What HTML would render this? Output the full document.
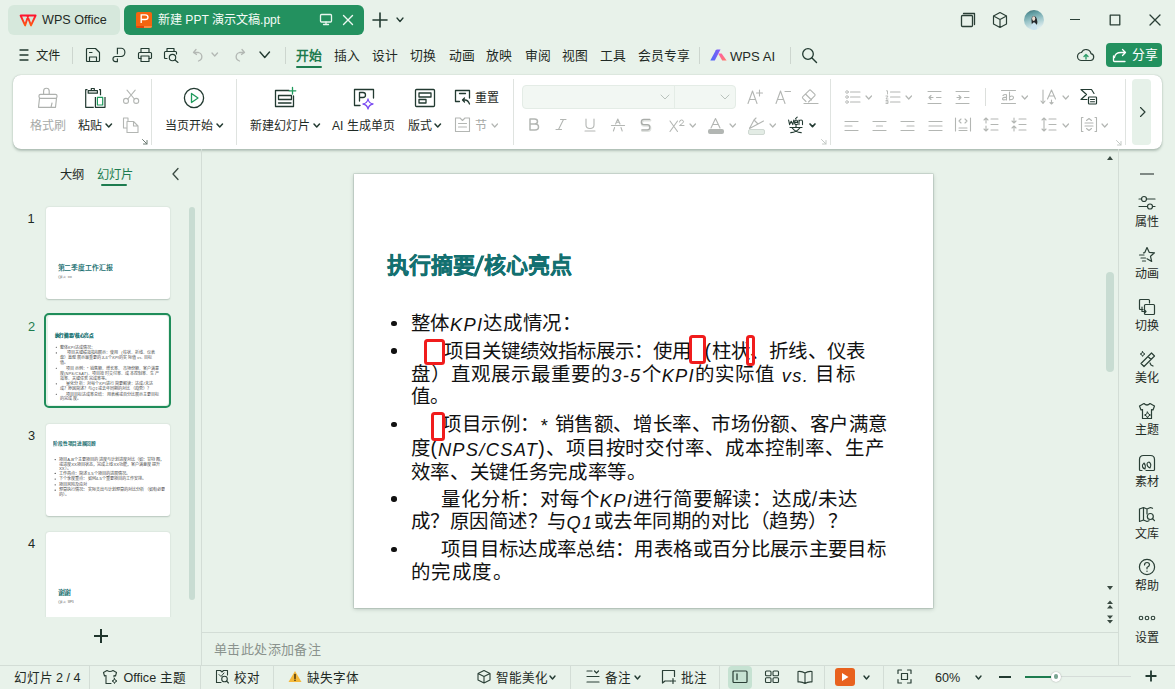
<!DOCTYPE html>
<html lang="zh-CN"><head><meta charset="utf-8"><title>WPS</title>
<style>
html,body{margin:0;padding:0}
body{width:1175px;height:689px;overflow:hidden;position:relative;background:#e8f2ea;font-family:"Liberation Sans",sans-serif;}
.a{position:absolute;white-space:nowrap;margin:0}
svg.a{overflow:visible}
i.lt{font-family:"Liberation Sans",sans-serif;font-style:italic;font-size:0.94em;letter-spacing:1.3px;position:relative;top:1px}
</style></head><body>
<div class="a" style="left:8px;top:5px;width:112px;height:30px;background:#d6e8dc;border-radius:6px"></div>
<svg class="a" style="left:19px;top:13.7px" width="18" height="13" viewBox="0 0 18 13" fill="none"><defs><linearGradient id="wg" x1="0" y1="0" x2="0" y2="1"><stop offset="0" stop-color="#ff1530"/><stop offset="1" stop-color="#ff5a12"/></linearGradient></defs><path d="M1.6 1.5 H9.3 L6.1 11.4 Z M8.2 1.5 H16.6 L12 11.4 Z" stroke="url(#wg)" stroke-width="1.9" stroke-linejoin="round"/></svg>
<div class="a" style="left:42px;top:14px;font-size:12.6px;line-height:12.6px;color:#1f2a25;font-weight:normal;">WPS Office</div>
<div class="a" style="left:124px;top:5px;width:240px;height:30px;background:#23915f;border-radius:6px"></div>
<svg class="a" style="left:136px;top:12px" width="16" height="16" viewBox="0 0 16 16"><rect x="0" y="0" width="16" height="16" rx="2" fill="#f4650f"/><path d="M0 14 H8 V16 H2 Q0 16 0 14 Z" fill="#e3470b"/><path d="M8 14 H16 Q16 16 14 16 H8 Z" fill="#ff8a3e"/><path d="M5.2 11 V2.8 H9.2 Q12 2.8 12 5.2 Q12 7.5 9.2 7.5 H5.2" stroke="#ffffff" stroke-width="1.35" fill="none"/></svg>
<div class="a" style="left:158px;top:14px;font-size:12.1px;line-height:12.1px;color:#f4fbf6;font-weight:normal;">新建 PPT 演示文稿.ppt</div>
<svg class="a" style="left:319px;top:13px;" width="14" height="13" viewBox="0 0 14 13" fill="none" stroke-linecap="round" stroke-linejoin="round"><rect x="1.5" y="1.5" width="11" height="7.5" rx="1" stroke="#e9f6ee" stroke-width="1.3"/><path d="M7 9 V11.5 M4.5 11.5 H9.5" stroke="#e9f6ee" stroke-width="1.3"/></svg>
<svg class="a" style="left:342px;top:14px;" width="12" height="12" viewBox="0 0 12 12" fill="none" stroke-linecap="round" stroke-linejoin="round"><path d="M1.5 1.5 L10.5 10.5 M10.5 1.5 L1.5 10.5" stroke="#eef8f2" stroke-width="1.4"/></svg>
<svg class="a" style="left:372px;top:12px;" width="16" height="16" viewBox="0 0 16 16" fill="none" stroke-linecap="round" stroke-linejoin="round"><path d="M8 1 V15 M1 8 H15" stroke="#223a31" stroke-width="1.6"/></svg>
<svg class="a" style="left:396px;top:17px;" width="8" height="5.5" viewBox="0 0 8 5.5" fill="none" stroke-linecap="round" stroke-linejoin="round"><path d="M1 1 L4.0 4.5 L7 1" stroke="#223a31" stroke-width="1.3"/></svg>
<svg class="a" style="left:960px;top:12px;" width="16" height="16" viewBox="0 0 16 16" fill="none" stroke-linecap="round" stroke-linejoin="round"><rect x="1.5" y="3.5" width="11" height="11" rx="1" stroke="#2a3f36" stroke-width="1.3"/><path d="M3.5 1.5 H14.5 V12.5" stroke="#2a3f36" stroke-width="1.3"/></svg>
<svg class="a" style="left:992px;top:11px;" width="16" height="18" viewBox="0 0 16 18" fill="none" stroke-linecap="round" stroke-linejoin="round"><path d="M8 1.5 L14.5 5 V13 L8 16.5 L1.5 13 V5 Z M1.5 5 L8 8.5 L14.5 5 M8 8.5 V16.5" stroke="#2a3f36" stroke-width="1.2"/></svg>
<svg class="a" style="left:1024px;top:10px" width="20" height="20" viewBox="0 0 20 20"><defs><clipPath id="av"><circle cx="10" cy="10" r="10"/></clipPath><linearGradient id="avg" x1="0" y1="0" x2="0.3" y2="1"><stop offset="0" stop-color="#3a6268"/><stop offset="0.25" stop-color="#5f9ba0"/><stop offset="0.6" stop-color="#9cc6ca"/><stop offset="1" stop-color="#dcecee"/></linearGradient></defs><g clip-path="url(#av)"><rect width="20" height="20" fill="url(#avg)"/><path d="M9.5 6 Q7.5 6.5 7.5 10 Q7.5 13 8 14.5 L13 14.5 Q14 12.5 12.8 9 Q12 6 9.5 6 Z" fill="#24272a"/><ellipse cx="9.7" cy="8.6" rx="1.6" ry="2.3" fill="#eadbd0"/><path d="M6.5 20 Q7 13.5 9.8 12.2 Q12.8 12.5 13.2 20 Z" fill="#c9e2ee"/></g></svg>
<div class="a" style="left:1070px;top:19px;width:10px;height:1.3px;background:#2a3f36;"></div>
<svg class="a" style="left:1109px;top:14px;" width="12" height="12" viewBox="0 0 12 12" fill="none" stroke-linecap="round" stroke-linejoin="round"><rect x="1.2" y="1.2" width="9.6" height="9.6" stroke="#2a3f36" stroke-width="1.3"/></svg>
<svg class="a" style="left:1149px;top:14px;" width="12" height="12" viewBox="0 0 12 12" fill="none" stroke-linecap="round" stroke-linejoin="round"><path d="M1 1 L11 11 M11 1 L1 11" stroke="#2a3f36" stroke-width="1.3"/></svg>
<svg class="a" style="left:19px;top:48px;" width="11" height="14" viewBox="0 0 11 14" fill="none" stroke-linecap="round" stroke-linejoin="round"><path d="M1 2 H9 M1 7 H9 M1 12 H9" stroke="#223a31" stroke-width="1.3"/></svg>
<div class="a" style="left:36px;top:50px;font-size:12.3px;line-height:12.3px;color:#1f2a25;font-weight:normal;">文件</div>
<div class="a" style="left:72px;top:47px;width:1px;height:17px;background:#cdd6cf;"></div>
<svg class="a" style="left:85px;top:47px;" width="16" height="16" viewBox="0 0 16 16" fill="none" stroke-linecap="round" stroke-linejoin="round"><path d="M1.5 2.5 Q1.5 1.5 2.5 1.5 H10.5 L14.5 5.5 V13.5 Q14.5 14.5 13.5 14.5 H2.5 Q1.5 14.5 1.5 13.5 Z" stroke="#223a31" stroke-width="1.15"/><rect x="4.5" y="10" width="7" height="4.5" stroke="#223a31" stroke-width="1.15"/><path d="M4.5 5.5 H7" stroke="#223a31" stroke-width="1.15"/></svg>
<svg class="a" style="left:111px;top:47px;" width="16" height="17" viewBox="0 0 16 17" fill="none" stroke-linecap="round" stroke-linejoin="round"><path d="M6.4 7.2 V1.2 H10.2 A3.7 4.15 0 0 1 10.2 9.5 H4.5 A2.55 2.55 0 0 0 4.5 14.6 H6.4 V11.5" stroke="#223a31" stroke-width="1.15" stroke-linecap="butt" stroke-linejoin="miter"/></svg>
<svg class="a" style="left:137px;top:47px;" width="16" height="16" viewBox="0 0 16 16" fill="none" stroke-linecap="round" stroke-linejoin="round"><rect x="4" y="1.5" width="8" height="4" stroke="#223a31" stroke-width="1.15"/><path d="M4 11.5 H2.5 Q1.5 11.5 1.5 10.5 V6.5 Q1.5 5.5 2.5 5.5 H13.5 Q14.5 5.5 14.5 6.5 V10.5 Q14.5 11.5 13.5 11.5 H12" stroke="#223a31" stroke-width="1.15"/><rect x="4" y="9" width="8" height="5.5" stroke="#223a31" stroke-width="1.15"/></svg>
<svg class="a" style="left:163px;top:47px;" width="17" height="16" viewBox="0 0 17 16" fill="none" stroke-linecap="round" stroke-linejoin="round"><path d="M4 4.5 V1.5 H11 V4.5 M4 11.5 H2.5 Q1.5 11.5 1.5 10.5 V5.5 Q1.5 4.5 2.5 4.5 H12.5 Q13.5 4.5 13.5 5.5 V7" stroke="#223a31" stroke-width="1.15"/><circle cx="9.5" cy="10.5" r="3.2" stroke="#223a31" stroke-width="1.15"/><path d="M12 13 L15 15.5" stroke="#223a31" stroke-width="1.15"/></svg>
<svg class="a" style="left:192px;top:48px;" width="13" height="14" viewBox="0 0 13 14" fill="none" stroke-linecap="round" stroke-linejoin="round"><path d="M4 1.5 L1.5 4.5 L4.5 6.5 M1.5 4.5 H6.5 A5 4.5 0 0 1 6.5 13" stroke="#b3b8b4" stroke-width="1.3"/></svg>
<svg class="a" style="left:211px;top:52px;" width="7.5" height="5" viewBox="0 0 7.5 5" fill="none" stroke-linecap="round" stroke-linejoin="round"><path d="M1 1 L3.75 4 L6.5 1" stroke="#b3b8b4" stroke-width="1.3"/></svg>
<svg class="a" style="left:233px;top:48px;" width="13" height="14" viewBox="0 0 13 14" fill="none" stroke-linecap="round" stroke-linejoin="round"><path d="M9 1.5 L11.5 4.5 L8.5 6.5 M11.5 4.5 H6.5 A5 4.5 0 0 0 6.5 13" stroke="#b3b8b4" stroke-width="1.3"/></svg>
<svg class="a" style="left:259px;top:51px;" width="11.5" height="7.5" viewBox="0 0 11.5 7.5" fill="none" stroke-linecap="round" stroke-linejoin="round"><path d="M1 1 L5.75 6.5 L10.5 1" stroke="#223a31" stroke-width="1.4"/></svg>
<div class="a" style="left:285px;top:47px;width:1px;height:17px;background:#cdd6cf;"></div>
<div class="a" style="left:296px;top:49.8px;font-size:12.8px;line-height:12.8px;color:#1d7c4f;font-weight:bold;">开始</div>
<div class="a" style="left:334px;top:49.8px;font-size:12.8px;line-height:12.8px;color:#1f2a25;font-weight:normal;">插入</div>
<div class="a" style="left:372px;top:49.8px;font-size:12.8px;line-height:12.8px;color:#1f2a25;font-weight:normal;">设计</div>
<div class="a" style="left:410px;top:49.8px;font-size:12.8px;line-height:12.8px;color:#1f2a25;font-weight:normal;">切换</div>
<div class="a" style="left:448.5px;top:49.8px;font-size:12.8px;line-height:12.8px;color:#1f2a25;font-weight:normal;">动画</div>
<div class="a" style="left:486px;top:49.8px;font-size:12.8px;line-height:12.8px;color:#1f2a25;font-weight:normal;">放映</div>
<div class="a" style="left:524.5px;top:49.8px;font-size:12.8px;line-height:12.8px;color:#1f2a25;font-weight:normal;">审阅</div>
<div class="a" style="left:562px;top:49.8px;font-size:12.8px;line-height:12.8px;color:#1f2a25;font-weight:normal;">视图</div>
<div class="a" style="left:600px;top:49.8px;font-size:12.8px;line-height:12.8px;color:#1f2a25;font-weight:normal;">工具</div>
<div class="a" style="left:638px;top:49.8px;font-size:12.8px;line-height:12.8px;color:#1f2a25;font-weight:normal;">会员专享</div>
<div class="a" style="left:296px;top:66px;width:26px;height:2px;background:#1d7c4f;border-radius:1px"></div>
<div class="a" style="left:699px;top:47px;width:1px;height:17px;background:#cdd6cf;"></div>
<svg class="a" style="left:710px;top:49px" width="17" height="12" viewBox="0 0 17 12"><defs><linearGradient id="ga" x1="0" y1="0" x2="1" y2="0"><stop offset="0" stop-color="#4a6cf7"/><stop offset="1" stop-color="#8b5cf6"/></linearGradient><linearGradient id="gb" x1="0" y1="0" x2="1" y2="1"><stop offset="0" stop-color="#ff5fa8"/><stop offset="1" stop-color="#ff7a6a"/></linearGradient></defs><path d="M0.3 11.5 L5.8 1.2 Q6.2 0.5 7 0.5 H10.5 L4.8 11.5 Z" fill="url(#ga)"/><path d="M8.2 4.6 L11.6 4.6 L16.6 11.5 H12.2 Z" fill="url(#gb)"/></svg>
<div class="a" style="left:730px;top:49.6px;font-size:13.1px;line-height:13.1px;color:#1f2a25;font-weight:normal;">WPS AI</div>
<div class="a" style="left:790px;top:47px;width:1px;height:17px;background:#cdd6cf;"></div>
<svg class="a" style="left:801px;top:47px;" width="17" height="17" viewBox="0 0 17 17" fill="none" stroke-linecap="round" stroke-linejoin="round"><circle cx="7" cy="7" r="5.3" stroke="#223a31" stroke-width="1.3"/><path d="M11 11 L15.5 15.5" stroke="#223a31" stroke-width="1.4"/></svg>
<svg class="a" style="left:1077px;top:47px;" width="18" height="15" viewBox="0 0 18 15" fill="none" stroke-linecap="round" stroke-linejoin="round"><path d="M4.5 13.5 H13.5 A3.5 3.5 0 0 0 14 6.6 A5 5 0 0 0 4.5 5.5 A4 4 0 0 0 4.5 13.5 Z" stroke="#2a3f36" stroke-width="1.2"/><path d="M9 12 V7.5 M7 9.5 L9 7.5 L11 9.5" stroke="#2f9e6a" stroke-width="1.4"/></svg>
<div class="a" style="left:1106px;top:43px;width:56px;height:24px;background:#23915f;border-radius:4px"></div>
<svg class="a" style="left:1112px;top:48px;" width="16" height="15" viewBox="0 0 16 15" fill="none" stroke-linecap="round" stroke-linejoin="round"><path d="M1.5 8 V12.5 Q1.5 13.5 2.5 13.5 H13" stroke="#ffffff" stroke-width="1.3"/><path d="M2.5 9.5 Q3 4.5 9 4.5 H13.5 M10.5 1.5 L13.5 4.5 L10.5 7.5" stroke="#ffffff" stroke-width="1.3"/></svg>
<div class="a" style="left:1132px;top:49px;font-size:12.8px;line-height:12.8px;color:#ffffff;font-weight:normal;">分享</div>
<div class="a" style="left:13px;top:75px;width:1149px;height:74px;background:#fff;border-radius:8px;box-shadow:0 1.5px 2.5px rgba(40,70,55,0.28),0 0 1px rgba(40,70,55,0.3)"></div>
<svg class="a" style="left:37px;top:86px;" width="22" height="23" viewBox="0 0 22 23" fill="none" stroke-linecap="round" stroke-linejoin="round"><path d="M6.6 8.3 V5 A2.7 2.7 0 0 1 12.2 5 V8.3" stroke="#aeb1ae" stroke-width="1.15"/><path d="M3.5 8.3 H18.5 Q20 8.3 20 9.8 V10.8 Q20 12.3 18.5 12.3 H3.5 Q2 12.3 2 10.8 V9.8 Q2 8.3 3.5 8.3 Z" stroke="#aeb1ae" stroke-width="1.15"/><path d="M2.5 12.3 L1.5 21.3 H18.5 L19.5 12.3 M14 21.3 L15 17" stroke="#aeb1ae" stroke-width="1.15"/></svg>
<div class="a" style="left:30px;top:120px;font-size:12px;line-height:12px;color:#a7aaa7;font-weight:normal;">格式刷</div>
<svg class="a" style="left:83px;top:87px;" width="24" height="22" viewBox="0 0 24 22" fill="none" stroke-linecap="round" stroke-linejoin="round"><path d="M4.5 2.7 H2.7 V20.3 H10.8 M16 2.7 H17.5 V8.3 M12.4 10.1 V20.3 H22 V10.1" stroke="#223a31" stroke-width="1.2" stroke-linecap="butt"/><path d="M5.2 3.7 H14.4 V6.2 H5.2 Z M8.3 3.7 V1.5 H11.3 V3.7" stroke="#223a31" stroke-width="1.2"/><rect x="14.4" y="10.3" width="5.3" height="7.7" stroke="#1f9a5c" stroke-width="1.2"/></svg>
<div class="a" style="left:78px;top:120px;font-size:12px;line-height:12px;color:#1f2a25;font-weight:normal;">粘贴</div>
<svg class="a" style="left:104.5px;top:123px;" width="7.5" height="5" viewBox="0 0 7.5 5" fill="none" stroke-linecap="round" stroke-linejoin="round"><path d="M1 1 L3.75 4 L6.5 1" stroke="#223a31" stroke-width="1.5"/></svg>
<svg class="a" style="left:122px;top:88px;" width="18" height="17" viewBox="0 0 18 17" fill="none" stroke-linecap="round" stroke-linejoin="round"><circle cx="4" cy="12.9" r="2.5" stroke="#b3b6b3" stroke-width="1.1"/><circle cx="14.2" cy="12.9" r="2.5" stroke="#b3b6b3" stroke-width="1.1"/><path d="M5.8 11 L13.2 2.2 M12.4 11 L5 2.2" stroke="#b3b6b3" stroke-width="1.1"/></svg>
<svg class="a" style="left:122px;top:116px;" width="18" height="18" viewBox="0 0 18 18" fill="none" stroke-linecap="round" stroke-linejoin="round"><path d="M6 4.5 V2 H1.5 V12 H4.5" stroke="#b3b6b3" stroke-width="1.1"/><path d="M5 5.5 H11.5 L16 10 V16.5 H5 Z M11.5 5.5 V10 H16" stroke="#b3b6b3" stroke-width="1.1"/></svg>
<svg class="a" style="left:141px;top:138px;" width="8" height="8" viewBox="0 0 8 8" fill="none" stroke-linecap="round" stroke-linejoin="round"><path d="M1.5 1.5 L6 6 M6 2.5 V6 H2.5" stroke="#6b7a72" stroke-width="1"/></svg>
<div class="a" style="left:151px;top:79px;width:1px;height:66px;background:#dfe3e0;"></div>
<svg class="a" style="left:183px;top:87px;" width="22" height="22" viewBox="0 0 22 22" fill="none" stroke-linecap="round" stroke-linejoin="round"><circle cx="11" cy="11" r="9.6" stroke="#223a31" stroke-width="1.3"/><path d="M8.5 6.5 L15 11 L8.5 15.5 Z" stroke="#1f9a5c" stroke-width="1.3"/></svg>
<div class="a" style="left:165px;top:120px;font-size:12px;line-height:12px;color:#1f2a25;font-weight:normal;">当页开始</div>
<svg class="a" style="left:215.5px;top:123px;" width="7.5" height="5" viewBox="0 0 7.5 5" fill="none" stroke-linecap="round" stroke-linejoin="round"><path d="M1 1 L3.75 4 L6.5 1" stroke="#223a31" stroke-width="1.5"/></svg>
<div class="a" style="left:236px;top:79px;width:1px;height:66px;background:#dfe3e0;"></div>
<svg class="a" style="left:273px;top:86px;" width="24" height="23" viewBox="0 0 24 23" fill="none" stroke-linecap="round" stroke-linejoin="round"><path d="M16 4.5 H2.5 V20.5 H20.5 V10" stroke="#223a31" stroke-width="1.3"/><rect x="5.5" y="9.5" width="13" height="4" stroke="#223a31" stroke-width="1.3"/><path d="M5.5 17 H18" stroke="#223a31" stroke-width="1.3"/><path d="M19.5 1.5 V8 M16.2 4.8 H22.8" stroke="#1f9a5c" stroke-width="1.3"/></svg>
<div class="a" style="left:250px;top:120px;font-size:12px;line-height:12px;color:#1f2a25;font-weight:normal;">新建幻灯片</div>
<svg class="a" style="left:313px;top:123px;" width="7.5" height="5" viewBox="0 0 7.5 5" fill="none" stroke-linecap="round" stroke-linejoin="round"><path d="M1 1 L3.75 4 L6.5 1" stroke="#223a31" stroke-width="1.5"/></svg>
<svg class="a" style="left:353px;top:88px;" width="24" height="24" viewBox="0 0 24 24" fill="none" stroke-linecap="round" stroke-linejoin="round"><path d="M7 17.5 H1.5 V1.5 H20.5 V10" stroke="#223a31" stroke-width="1.3"/><path d="M6.5 13 V4.5 H10 Q12.5 4.5 12.5 7 Q12.5 9.5 10 9.5 H6.5" stroke="#223a31" stroke-width="1.3"/><path d="M15 11 Q15.8 15.2 20 16 Q15.8 16.8 15 21 Q14.2 16.8 10 16 Q14.2 15.2 15 11 Z" stroke="#7c4df2" stroke-width="1.3"/></svg>
<div class="a" style="left:332px;top:120px;font-size:12px;line-height:12px;color:#1f2a25;font-weight:normal;">AI 生成单页</div>
<svg class="a" style="left:414px;top:88px;" width="22" height="20" viewBox="0 0 22 20" fill="none" stroke-linecap="round" stroke-linejoin="round"><rect x="1.5" y="1.5" width="19" height="17" rx="1" stroke="#223a31" stroke-width="1.3"/><rect x="5" y="5" width="12" height="4" stroke="#223a31" stroke-width="1.3"/><rect x="5" y="11.5" width="7" height="3.5" stroke="#223a31" stroke-width="1.3"/></svg>
<div class="a" style="left:408px;top:120px;font-size:12px;line-height:12px;color:#1f2a25;font-weight:normal;">版式</div>
<svg class="a" style="left:434px;top:123px;" width="7.5" height="5" viewBox="0 0 7.5 5" fill="none" stroke-linecap="round" stroke-linejoin="round"><path d="M1 1 L3.75 4 L6.5 1" stroke="#223a31" stroke-width="1.5"/></svg>
<svg class="a" style="left:454px;top:89px;" width="18" height="17" viewBox="0 0 18 17" fill="none" stroke-linecap="round" stroke-linejoin="round"><path d="M5.5 12.5 H1.5 V1.5 H15.5 V9" stroke="#223a31" stroke-width="1.3"/><path d="M5.5 4.5 H11.5" stroke="#223a31" stroke-width="1.3"/><path d="M8.5 11 L10.5 9 M8.5 11 L10.5 13 M8.5 11 H11 Q14 11 15.5 15" stroke="#223a31" stroke-width="1.3"/></svg>
<div class="a" style="left:475px;top:92px;font-size:12px;line-height:12px;color:#1f2a25;font-weight:normal;">重置</div>
<svg class="a" style="left:454px;top:116px;" width="18" height="17" viewBox="0 0 18 17" fill="none" stroke-linecap="round" stroke-linejoin="round"><path d="M1.5 2 V15.5 H15.5 V2 H11 L8.5 4.5 L6 2 Z" stroke="#b3b6b3" stroke-width="1.1"/><path d="M4.5 7.5 H12.5 M4.5 11 H12.5" stroke="#b3b6b3" stroke-width="1.1"/></svg>
<div class="a" style="left:475px;top:120px;font-size:12px;line-height:12px;color:#a7aaa7;font-weight:normal;">节</div>
<svg class="a" style="left:491px;top:123px;" width="7.5" height="5" viewBox="0 0 7.5 5" fill="none" stroke-linecap="round" stroke-linejoin="round"><path d="M1 1 L3.75 4 L6.5 1" stroke="#b3b6b3" stroke-width="1.2"/></svg>
<div class="a" style="left:513px;top:79px;width:1px;height:66px;background:#dfe3e0;"></div>
<div class="a" style="left:522px;top:85px;width:212px;height:22px;background:#f2f7f3;border:1px solid #e4ece6;border-radius:4px"></div>
<div class="a" style="left:674px;top:86px;width:1px;height:22px;background:#e4ece6;"></div>
<svg class="a" style="left:660px;top:94px;" width="10" height="6" viewBox="0 0 10 6" fill="none" stroke-linecap="round" stroke-linejoin="round"><path d="M1 1 L5.0 5 L9 1" stroke="#b9c2bc" stroke-width="1"/></svg>
<svg class="a" style="left:720px;top:94px;" width="10" height="6" viewBox="0 0 10 6" fill="none" stroke-linecap="round" stroke-linejoin="round"><path d="M1 1 L5.0 5 L9 1" stroke="#b9c2bc" stroke-width="1"/></svg>
<svg class="a" style="left:747px;top:89px;" width="17" height="16" viewBox="0 0 17 16" fill="none" stroke-linecap="round" stroke-linejoin="round"><path d="M1 14.5 L5.5 2 L10 14.5 M2.6 10.5 H8.4" stroke="#b3b6b3" stroke-width="1.1"/><path d="M12.5 1 V7 M9.5 4 H15.5" stroke="#b3b6b3" stroke-width="1.1"/></svg>
<svg class="a" style="left:775px;top:89px;" width="17" height="16" viewBox="0 0 17 16" fill="none" stroke-linecap="round" stroke-linejoin="round"><path d="M1 14.5 L5.5 2 L10 14.5 M2.6 10.5 H8.4" stroke="#b3b6b3" stroke-width="1.1"/><path d="M10 2.5 H15.5" stroke="#b3b6b3" stroke-width="1.1"/></svg>
<svg class="a" style="left:801px;top:89px;" width="18" height="16" viewBox="0 0 18 16" fill="none" stroke-linecap="round" stroke-linejoin="round"><path d="M5 12.5 L1.8 9.3 Q1 8.5 1.8 7.7 L8.2 1.3 Q9 0.5 9.8 1.3 L13.7 5.2 Q14.5 6 13.7 6.8 L7.5 13 M4.5 5 L10.5 11" stroke="#b3b6b3" stroke-width="1.1"/><path d="M3 14.5 H17" stroke="#b3b6b3" stroke-width="1.2"/></svg>
<svg class="a" style="left:528px;top:118px;" width="12" height="13" viewBox="0 0 12 13" fill="none" stroke-linecap="round" stroke-linejoin="round"><path d="M2 1 H6.5 Q9.5 1 9.5 3.5 Q9.5 6 6.5 6 H2 Z M2 6 H7 Q10.5 6 10.5 9 Q10.5 12 7 12 H2 Z" stroke="#b3b6b3" stroke-width="1.5"/></svg>
<svg class="a" style="left:555px;top:118px;" width="12" height="13" viewBox="0 0 12 13" fill="none" stroke-linecap="round" stroke-linejoin="round"><path d="M8.5 1.5 L3.5 11.5 M5.5 1.5 H11 M1 11.5 H6.5" stroke="#b3b6b3" stroke-width="1.1"/></svg>
<svg class="a" style="left:584px;top:118px;" width="12" height="14" viewBox="0 0 12 14" fill="none" stroke-linecap="round" stroke-linejoin="round"><path d="M2 1 V7 Q2 10.5 6 10.5 Q10 10.5 10 7 V1 M1 13 H11" stroke="#b3b6b3" stroke-width="1.1"/></svg>
<svg class="a" style="left:610px;top:117px;" width="16" height="15" viewBox="0 0 16 15" fill="none" stroke-linecap="round" stroke-linejoin="round"><path d="M5.6 7 L7.8 2 L10 7 M6.4 5.2 H9.2" stroke="#b3b6b3" stroke-width="1.05"/><path d="M1.5 8.5 H14.5" stroke="#b3b6b3" stroke-width="1.2"/><path d="M4.6 10.5 L3.4 14 M11 10.5 L12.2 14" stroke="#b3b6b3" stroke-width="1.05"/></svg>
<svg class="a" style="left:639px;top:117px;" width="14" height="16" viewBox="0 0 14 16" fill="none" stroke-linecap="round" stroke-linejoin="round"><path d="M11.3 3.3 H5.3 Q2.8 3.3 2.8 5.9 Q2.8 8.6 5.3 8.6 H8.8 Q11.3 8.6 11.3 11.2 Q11.3 13.9 8.8 13.9 H3.3" stroke="#dfe2df" stroke-width="2.2"/><path d="M10.8 2.3 H4.8 Q2.3 2.3 2.3 4.9 Q2.3 7.6 4.8 7.6 H8.3 Q10.8 7.6 10.8 10.2 Q10.8 12.9 8.3 12.9 H2.8" stroke="#a9aca9" stroke-width="1.2"/></svg>
<svg class="a" style="left:669px;top:119px;" width="16" height="13" viewBox="0 0 16 13" fill="none" stroke-linecap="round" stroke-linejoin="round"><path d="M1 2 L8.5 12.5 M8.5 2 L1 12.5" stroke="#b3b6b3" stroke-width="1.1"/><path d="M10.5 3 Q10.5 1 12.5 1 Q14.5 1 14.5 2.8 Q14.5 4 10.5 6.5 H15" stroke="#b3b6b3" stroke-width="1"/></svg>
<svg class="a" style="left:688.5px;top:123px;" width="7.5" height="5" viewBox="0 0 7.5 5" fill="none" stroke-linecap="round" stroke-linejoin="round"><path d="M1 1 L3.75 4 L6.5 1" stroke="#b3b6b3" stroke-width="1.2"/></svg>
<svg class="a" style="left:707px;top:117px;" width="18" height="17" viewBox="0 0 18 17" fill="none" stroke-linecap="round" stroke-linejoin="round"><path d="M4 11 L8.5 1.5 L13 11 M5.6 7.5 H11.4" stroke="#b3b6b3" stroke-width="1.1"/></svg>
<div class="a" style="left:708px;top:129px;width:16px;height:4.5px;background:#b2b6b3;border-radius:2px"></div>
<svg class="a" style="left:728.5px;top:123px;" width="7.5" height="5" viewBox="0 0 7.5 5" fill="none" stroke-linecap="round" stroke-linejoin="round"><path d="M1 1 L3.75 4 L6.5 1" stroke="#b3b6b3" stroke-width="1.2"/></svg>
<svg class="a" style="left:747px;top:117px;" width="18" height="13" viewBox="0 0 18 13" fill="none" stroke-linecap="round" stroke-linejoin="round"><path d="M2.5 11.5 L7 3 L11 7 Z M7 3 L9 1 M11 7 L16.5 4" stroke="#b3b6b3" stroke-width="1.1"/></svg>
<div class="a" style="left:748px;top:128.5px;width:15px;height:4px;background:#e3ece5;border:1px solid #cfd8d2;border-radius:2px"></div>
<svg class="a" style="left:768.5px;top:123px;" width="7.5" height="5" viewBox="0 0 7.5 5" fill="none" stroke-linecap="round" stroke-linejoin="round"><path d="M1 1 L3.75 4 L6.5 1" stroke="#b3b6b3" stroke-width="1.2"/></svg>
<svg class="a" style="left:787px;top:116px;" width="18" height="18" viewBox="0 0 18 18" fill="none" stroke-linecap="round" stroke-linejoin="round"><path d="M1.6 4 L2.6 8.6 L4.2 5.2 L5.8 8.6 L6.8 4 M7.6 6.4 H10.6 Q10.6 4 9.1 4 Q7.6 4 7.6 6.4 Q7.6 8.6 9.2 8.6 Q10.2 8.6 10.6 8 M8.6 2.6 L10.2 1.2 M12 4 V8.6 M12 5.6 Q12.6 4 14 4 Q15.5 4 15.5 5.6 V8.6" stroke="#223a31" stroke-width="1.1"/><path d="M3 11.5 H15 M9 9.6 V11.2 M5.2 12 Q8.5 16.3 14.2 16.6 M12.8 12 Q9.5 16.3 3.8 16.6" stroke="#223a31" stroke-width="1.15"/></svg>
<svg class="a" style="left:808.5px;top:123.3px;" width="7" height="4.6" viewBox="0 0 7 4.6" fill="none" stroke-linecap="round" stroke-linejoin="round"><path d="M1 1 L3.5 3.6 L6 1" stroke="#223a31" stroke-width="1.7"/></svg>
<svg class="a" style="left:820px;top:138px;" width="8" height="8" viewBox="0 0 8 8" fill="none" stroke-linecap="round" stroke-linejoin="round"><path d="M1.5 1.5 L6 6 M6 2.5 V6 H2.5" stroke="#c3c9c5" stroke-width="1"/></svg>
<div class="a" style="left:830px;top:79px;width:1px;height:66px;background:#dfe3e0;"></div>
<svg class="a" style="left:845px;top:90px;" width="16" height="15" viewBox="0 0 16 15" fill="none" stroke-linecap="round" stroke-linejoin="round"><circle cx="2" cy="2" r="1.3" stroke="#b3b6b3" stroke-width="0.9"/><circle cx="2" cy="7" r="1.3" stroke="#b3b6b3" stroke-width="0.9"/><circle cx="2" cy="12" r="1.3" stroke="#b3b6b3" stroke-width="0.9"/><path d="M5.5 2 H15 M5.5 7 H15 M5.5 12 H15" stroke="#b3b6b3" stroke-width="1.1"/></svg>
<svg class="a" style="left:865px;top:95px;" width="7.5" height="5" viewBox="0 0 7.5 5" fill="none" stroke-linecap="round" stroke-linejoin="round"><path d="M1 1 L3.75 4 L6.5 1" stroke="#b3b6b3" stroke-width="1.2"/></svg>
<svg class="a" style="left:885px;top:90px;" width="16" height="15" viewBox="0 0 16 15" fill="none" stroke-linecap="round" stroke-linejoin="round"><path d="M1.5 0.8 H2.5 V4 M1 6 H3 L1 9 H3 M1 10.5 H3 V13.5 H1 M1 12 H2.5" stroke="#b3b6b3" stroke-width="0.9"/><path d="M5.5 2 H15 M5.5 7 H15 M5.5 12 H15" stroke="#b3b6b3" stroke-width="1.1"/></svg>
<svg class="a" style="left:905px;top:95px;" width="7.5" height="5" viewBox="0 0 7.5 5" fill="none" stroke-linecap="round" stroke-linejoin="round"><path d="M1 1 L3.75 4 L6.5 1" stroke="#b3b6b3" stroke-width="1.2"/></svg>
<svg class="a" style="left:927px;top:90px;" width="15" height="15" viewBox="0 0 15 15" fill="none" stroke-linecap="round" stroke-linejoin="round"><path d="M1 1.5 H14 M1 13.5 H14 M9.5 7.5 H14 M6 7.5 H2 M4 5.5 L2 7.5 L4 9.5" stroke="#b3b6b3" stroke-width="1.1"/></svg>
<svg class="a" style="left:955px;top:90px;" width="15" height="15" viewBox="0 0 15 15" fill="none" stroke-linecap="round" stroke-linejoin="round"><path d="M1 1.5 H14 M1 13.5 H14 M9.5 7.5 H14 M2 7.5 H6 M4 5.5 L6 7.5 L4 9.5" stroke="#b3b6b3" stroke-width="1.1"/></svg>
<div class="a" style="left:985px;top:88px;width:1px;height:18px;background:#dcdfdc;"></div>
<svg class="a" style="left:1000px;top:89px;" width="17" height="16" viewBox="0 0 17 16" fill="none" stroke-linecap="round" stroke-linejoin="round"><path d="M1.5 1.5 H15.5 M1.5 14.5 H15.5" stroke="#b3b6b3" stroke-width="1.1"/><path d="M3 6.5 Q4.5 5 6.5 5.8 V11 M6.5 8.5 Q2.5 8 2.5 10 Q2.5 11.5 6.5 10.5 M9.5 3 V11 M9.5 8 Q12.5 5.8 13.5 8.3 Q13.5 11.2 9.5 10.5" stroke="#b3b6b3" stroke-width="1.1"/></svg>
<svg class="a" style="left:1021px;top:95px;" width="7.5" height="5" viewBox="0 0 7.5 5" fill="none" stroke-linecap="round" stroke-linejoin="round"><path d="M1 1 L3.75 4 L6.5 1" stroke="#b3b6b3" stroke-width="1.2"/></svg>
<svg class="a" style="left:1040px;top:89px;" width="18" height="16" viewBox="0 0 18 16" fill="none" stroke-linecap="round" stroke-linejoin="round"><path d="M3 1 V14.5 M1 12 L3 14.5 L5 12" stroke="#b3b6b3" stroke-width="1.1"/><path d="M7.5 10 L11.5 1 L15.5 10 M9 7 H14 M11.5 11 V15 M10 13.5 L11.5 15 L13 13.5" stroke="#b3b6b3" stroke-width="1.1"/></svg>
<svg class="a" style="left:1062px;top:95px;" width="7.5" height="5" viewBox="0 0 7.5 5" fill="none" stroke-linecap="round" stroke-linejoin="round"><path d="M1 1 L3.75 4 L6.5 1" stroke="#b3b6b3" stroke-width="1.2"/></svg>
<svg class="a" style="left:1079px;top:88px;" width="20" height="18" viewBox="0 0 20 18" fill="none" stroke-linecap="round" stroke-linejoin="round"><path d="M2 1.5 H12.5 L15 5.5 M2 1.5 L7.5 6.5 L2 11.5 H8" stroke="#223a31" stroke-width="1.15"/><rect x="9.5" y="9" width="8" height="7" rx="0.8" stroke="#223a31" stroke-width="1.2"/><path d="M11.5 11.5 H15.5 M11.5 13.8 H15.5" stroke="#223a31" stroke-width="1.1"/></svg>
<svg class="a" style="left:843.5px;top:119.5px;" width="15" height="12" viewBox="0 0 15 12" fill="none" stroke-linecap="round" stroke-linejoin="round"><path d="M1 1.5 H14 M1 6 H8 M1 10.5 H14" stroke="#b3b6b3" stroke-width="1.2"/></svg>
<svg class="a" style="left:872px;top:119.5px;" width="15" height="12" viewBox="0 0 15 12" fill="none" stroke-linecap="round" stroke-linejoin="round"><path d="M1 1.5 H14 M4.5 6 H10.5 M1 10.5 H14" stroke="#b3b6b3" stroke-width="1.2"/></svg>
<svg class="a" style="left:900px;top:119.5px;" width="15" height="12" viewBox="0 0 15 12" fill="none" stroke-linecap="round" stroke-linejoin="round"><path d="M1 1.5 H14 M7 6 H14 M1 10.5 H14" stroke="#b3b6b3" stroke-width="1.2"/></svg>
<svg class="a" style="left:928px;top:119.5px;" width="15" height="12" viewBox="0 0 15 12" fill="none" stroke-linecap="round" stroke-linejoin="round"><path d="M1 1.5 H14 M1 6 H14 M1 10.5 H14" stroke="#b3b6b3" stroke-width="1.2"/></svg>
<svg class="a" style="left:954px;top:117px;" width="18" height="15" viewBox="0 0 18 15" fill="none" stroke-linecap="round" stroke-linejoin="round"><path d="M1.5 1 V14 M16.5 1 V14 M5 11 H13 M5 13.5 H13 M7 2 L5 4 L7 6 M11 2 L13 4 L11 6" stroke="#b3b6b3" stroke-width="1.1"/></svg>
<svg class="a" style="left:983px;top:117px;" width="16" height="15" viewBox="0 0 16 15" fill="none" stroke-linecap="round" stroke-linejoin="round"><path d="M3 1 V6 M1 3 L3 1 L5 3 M3 9 V14 M1 12 L3 14 L5 12 M8 2 H15 M8 7.5 H15 M8 13 H15" stroke="#b3b6b3" stroke-width="1.1"/></svg>
<svg class="a" style="left:1011px;top:117px;" width="16" height="15" viewBox="0 0 16 15" fill="none" stroke-linecap="round" stroke-linejoin="round"><path d="M3 1 V6 M1 4 L3 6 L5 4 M3 9 V14 M1 11 L3 9 L5 11 M8 2 H15 M8 7.5 H15 M8 13 H15" stroke="#b3b6b3" stroke-width="1.1"/></svg>
<svg class="a" style="left:1041px;top:117px;" width="16" height="15" viewBox="0 0 16 15" fill="none" stroke-linecap="round" stroke-linejoin="round"><path d="M3 1 V14 M1 3 L3 1 L5 3 M1 12 L3 14 L5 12 M8 2 H15 M8 7.5 H15 M8 13 H15" stroke="#b3b6b3" stroke-width="1.1"/></svg>
<svg class="a" style="left:1062px;top:123px;" width="7.5" height="5" viewBox="0 0 7.5 5" fill="none" stroke-linecap="round" stroke-linejoin="round"><path d="M1 1 L3.75 4 L6.5 1" stroke="#b3b6b3" stroke-width="1.2"/></svg>
<svg class="a" style="left:1080px;top:116px;" width="18" height="17" viewBox="0 0 18 17" fill="none" stroke-linecap="round" stroke-linejoin="round"><path d="M3 1.5 H1.5 V15.5 H3 M15 1.5 H16.5 V15.5 H15 M5 7 H13 M5 10 H13 M6.5 4.5 L9 2.5 L11.5 4.5 M6.5 12.5 L9 14.5 L11.5 12.5" stroke="#b3b6b3" stroke-width="1.1"/></svg>
<svg class="a" style="left:1101px;top:123px;" width="7.5" height="5" viewBox="0 0 7.5 5" fill="none" stroke-linecap="round" stroke-linejoin="round"><path d="M1 1 L3.75 4 L6.5 1" stroke="#b3b6b3" stroke-width="1.2"/></svg>
<svg class="a" style="left:1115px;top:139px;" width="8" height="8" viewBox="0 0 8 8" fill="none" stroke-linecap="round" stroke-linejoin="round"><path d="M1.5 1.5 L6 6 M6 2.5 V6 H2.5" stroke="#c3c9c5" stroke-width="1"/></svg>
<div class="a" style="left:1125px;top:79px;width:1px;height:66px;background:#dfe3e0;"></div>
<div class="a" style="left:1132px;top:79px;width:19px;height:66px;background:#e6f1e9;border-radius:4px"></div>
<svg class="a" style="left:1139px;top:106px;" width="8" height="12" viewBox="0 0 8 12" fill="none" stroke-linecap="round" stroke-linejoin="round"><path d="M1.5 1.5 L6 6 L1.5 10.5" stroke="#2a3f36" stroke-width="1.15"/></svg>
<div class="a" style="left:201px;top:149px;width:1px;height:516px;background:#d3ddd6;"></div>
<div class="a" style="left:60px;top:169px;font-size:12.3px;line-height:12.3px;color:#1f2a25;font-weight:normal;">大纲</div>
<div class="a" style="left:96.5px;top:169px;font-size:12.3px;line-height:12.3px;color:#1d7c4f;font-weight:normal;">幻灯片</div>
<div class="a" style="left:101px;top:184px;width:26px;height:2px;background:#1d7c4f;border-radius:1px"></div>
<svg class="a" style="left:171px;top:167px;" width="9" height="14" viewBox="0 0 9 14" fill="none" stroke-linecap="round" stroke-linejoin="round"><path d="M7 1.5 L2 7 L7 12.5" stroke="#3a4a42" stroke-width="1.3"/></svg>
<div class="a" style="left:189px;top:207px;width:6px;height:393px;background:#c8dcd2;border-radius:3px"></div>
<div class="a" style="left:27.5px;top:213px;font-size:12.8px;line-height:12.8px;color:#1f2a25;font-weight:normal;">1</div>
<div class="a" style="left:45.5px;top:207px;width:124px;height:92px;background:#fff;border-radius:3px;overflow:hidden;box-shadow:0 0.5px 1.5px rgba(40,70,55,0.25)"><div class="a" style="left:0;top:0;width:579px;height:434px;transform:scale(0.21416);transform-origin:0 0"><div class="a" style="left:54px;top:266px;font-size:32px;line-height:32px;color:#176e6f;font-weight:bold">第二季度工作汇报</div><div class="a" style="left:54px;top:323px;font-size:12px;line-height:12px;color:#555">汇报人：xxx</div></div></div>
<div class="a" style="left:43.8px;top:313.2px;width:127px;height:95.3px;border:2.5px solid #1f8d5a;border-radius:5px;box-sizing:border-box"></div>
<div class="a" style="left:28px;top:321px;font-size:12.8px;line-height:12.8px;color:#1d7c4f;font-weight:normal;">2</div>
<div class="a" style="left:47.5px;top:316.3px;width:120.8px;height:89.1px;background:#fff;border-radius:3px;overflow:hidden;"><div class="a" style="left:0;top:0;width:579px;height:434px;transform:scale(0.20864);transform-origin:0 0"><div class="a" style="left:32.5px;top:80.5px;font-size:22px;line-height:22px;color:#137070;font-weight:bold;-webkit-text-stroke:0.35px #137070">执行摘要</div>
<div class="a" style="left:129.5px;top:80.5px;font-size:22px;line-height:22px;color:#137070;font-weight:bold;-webkit-text-stroke:0.35px #137070">核心亮点</div>
<svg class="a" style="left:117.5px;top:80.5px" width="14" height="23" viewBox="0 0 14 23"><path d="M1 21.5 L4.2 21.5 L12.5 0.5 L9.3 0.5 Z" fill="#137070"/></svg>
<div class="a" style="left:56.5px;top:140.3px;font-size:19.45px;line-height:19.45px;color:#4a4a4a;letter-spacing:0.714px;">整体<i class="lt">KPI</i>达成情况：</div>
<div class="a" style="left:37px;top:146.8px;width:5.5px;height:5.5px;border-radius:50%;background:#4a4a4a"></div>
<div class="a" style="left:90px;top:167.8px;font-size:19.45px;line-height:19.45px;color:#4a4a4a;letter-spacing:0.000px;">项目关键绩效指标展示：使用</div>
<div class="a" style="left:350.5px;top:167.8px;font-size:19.45px;line-height:19.45px;color:#4a4a4a;letter-spacing:0.000px;">(</div>
<div class="a" style="left:358px;top:167.8px;font-size:19.45px;line-height:19.45px;color:#4a4a4a;letter-spacing:0.000px;">柱状</div>
<div class="a" style="left:396px;top:167.8px;font-size:19.45px;line-height:19.45px;color:#4a4a4a;letter-spacing:0.000px;">、</div>
<div class="a" style="left:415px;top:167.8px;font-size:19.45px;line-height:19.45px;color:#4a4a4a;letter-spacing:0.000px;letter-spacing:0.35px">折线、仪表</div>
<div class="a" style="left:37px;top:174.3px;width:5.5px;height:5.5px;border-radius:50%;background:#4a4a4a"></div>
<div class="a" style="left:56.5px;top:190.8px;font-size:19.45px;line-height:19.45px;color:#4a4a4a;letter-spacing:1.074px;">盘）直观展示最重要的<i class="lt">3-5</i>个<i class="lt">KPI</i>的实际值 <i class="lt">vs.</i> 目标</div>
<div class="a" style="left:56.5px;top:213.3px;font-size:19.45px;line-height:19.45px;color:#4a4a4a;letter-spacing:0.000px;">值。</div>
<div class="a" style="left:88px;top:241.3px;font-size:19.45px;line-height:19.45px;color:#4a4a4a;letter-spacing:0.617px;">项目示例：<i class="lt">*</i> 销售额、增长率、市场份额、客户满意</div>
<div class="a" style="left:37px;top:247.8px;width:5.5px;height:5.5px;border-radius:50%;background:#4a4a4a"></div>
<div class="a" style="left:56.5px;top:265.3px;font-size:19.45px;line-height:19.45px;color:#4a4a4a;letter-spacing:0.947px;">度(<i class="lt">NPS/CSAT</i>)、项目按时交付率、成本控制率、生产</div>
<div class="a" style="left:56.5px;top:289.3px;font-size:19.45px;line-height:19.45px;color:#4a4a4a;letter-spacing:0.667px;">效率、关键任务完成率等。</div>
<div class="a" style="left:87px;top:315.7px;font-size:19.45px;line-height:19.45px;color:#4a4a4a;letter-spacing:0.850px;">量化分析：对每个<i class="lt">KPI</i>进行简要解读：达成/未达</div>
<div class="a" style="left:37px;top:322.2px;width:5.5px;height:5.5px;border-radius:50%;background:#4a4a4a"></div>
<div class="a" style="left:56.5px;top:337.50000000000006px;font-size:19.45px;line-height:19.45px;color:#4a4a4a;letter-spacing:0.505px;">成？原因简述？与<i class="lt">Q1</i>或去年同期的对比（趋势）？</div>
<div class="a" style="left:87px;top:366.3px;font-size:19.45px;line-height:19.45px;color:#4a4a4a;letter-spacing:0.348px;">项目目标达成率总结：用表格或百分比展示主要目标</div>
<div class="a" style="left:37px;top:372.8px;width:5.5px;height:5.5px;border-radius:50%;background:#4a4a4a"></div>
<div class="a" style="left:56.5px;top:388.90000000000003px;font-size:19.45px;line-height:19.45px;color:#4a4a4a;letter-spacing:1.600px;">的完成度。</div></div></div>
<div class="a" style="left:28px;top:430px;font-size:12.8px;line-height:12.8px;color:#1f2a25;font-weight:normal;">3</div>
<div class="a" style="left:45.5px;top:424px;width:124px;height:92px;background:#fff;border-radius:3px;overflow:hidden;box-shadow:0 0.5px 1.5px rgba(40,70,55,0.25)"><div class="a" style="left:0;top:0;width:579px;height:434px;transform:scale(0.21416);transform-origin:0 0"><div class="a" style="left:35px;top:78px;font-size:22px;line-height:22px;color:#176e6f;font-weight:bold">阶段性项目进展回顾</div><div class="a" style="left:40px;top:163px;width:5.5px;height:5.5px;border-radius:50%;background:#4a4a4a"></div><div class="a" style="left:61px;top:156px;font-size:19.45px;line-height:19.45px;color:#4a4a4a;letter-spacing:0px">项目A-B个主要项目的进度与计划进度对比（如：甘特图，</div><div class="a" style="left:61px;top:179px;font-size:19.45px;line-height:19.45px;color:#4a4a4a;letter-spacing:0px">或进度XX项目状态，完成上线XX功能，客户满意度提升</div><div class="a" style="left:61px;top:199px;font-size:19.45px;line-height:19.45px;color:#4a4a4a;letter-spacing:0px">XX）。</div><div class="a" style="left:40px;top:228px;width:5.5px;height:5.5px;border-radius:50%;background:#4a4a4a"></div><div class="a" style="left:61px;top:221px;font-size:19.45px;line-height:19.45px;color:#4a4a4a;letter-spacing:0px">工作亮点：简述3-5个项目的进展情况。</div><div class="a" style="left:40px;top:254px;width:5.5px;height:5.5px;border-radius:50%;background:#4a4a4a"></div><div class="a" style="left:61px;top:247px;font-size:19.45px;line-height:19.45px;color:#4a4a4a;letter-spacing:0px">下个季度重点：如何4-5个重要项目的工作安排。</div><div class="a" style="left:40px;top:281px;width:5.5px;height:5.5px;border-radius:50%;background:#4a4a4a"></div><div class="a" style="left:61px;top:274px;font-size:19.45px;line-height:19.45px;color:#4a4a4a;letter-spacing:0px">项目风险及应对</div><div class="a" style="left:40px;top:306px;width:5.5px;height:5.5px;border-radius:50%;background:#4a4a4a"></div><div class="a" style="left:61px;top:299px;font-size:19.45px;line-height:19.45px;color:#4a4a4a;letter-spacing:0px">预算执行情况：实际支出与计划预算的对比分析（如有必要</div><div class="a" style="left:61px;top:322px;font-size:19.45px;line-height:19.45px;color:#4a4a4a;letter-spacing:0px">的）。</div></div></div>
<div class="a" style="left:28px;top:538px;font-size:12.8px;line-height:12.8px;color:#1f2a25;font-weight:normal;">4</div>
<div class="a" style="left:0;top:0;width:201px;height:616.5px;overflow:hidden">
<div class="a" style="left:45.5px;top:531.5px;width:124px;height:90px;background:#fff;border-radius:3px;overflow:hidden;box-shadow:0 0.5px 1.5px rgba(40,70,55,0.25)"><div class="a" style="left:0;top:0;width:579px;height:434px;transform:scale(0.21416);transform-origin:0 0"><div class="a" style="left:54px;top:267px;font-size:32px;line-height:32px;color:#176e6f;font-weight:bold">谢谢</div><div class="a" style="left:54px;top:320px;font-size:12px;line-height:12px;color:#555">汇报人：WPS</div></div></div>
</div>
<svg class="a" style="left:93px;top:628px;" width="16" height="16" viewBox="0 0 16 16" fill="none" stroke-linecap="round" stroke-linejoin="round"><path d="M8 1 V15 M1 8 H15" stroke="#1f352c" stroke-width="2" stroke-linecap="butt"/></svg>
<div class="a" style="left:354px;top:174px;width:579px;height:434px;background:#fff;box-shadow:0 0 0 0.5px rgba(60,80,70,0.25),0 1px 4px rgba(40,70,55,0.28)"><div class="a" style="left:32.5px;top:80.5px;font-size:22px;line-height:22px;color:#137070;font-weight:bold;-webkit-text-stroke:0.35px #137070">执行摘要</div>
<div class="a" style="left:129.5px;top:80.5px;font-size:22px;line-height:22px;color:#137070;font-weight:bold;-webkit-text-stroke:0.35px #137070">核心亮点</div>
<svg class="a" style="left:117.5px;top:80.5px" width="14" height="23" viewBox="0 0 14 23"><path d="M1 21.5 L4.2 21.5 L12.5 0.5 L9.3 0.5 Z" fill="#137070"/></svg>
<div class="a" style="left:56.5px;top:140.3px;font-size:19.45px;line-height:19.45px;color:#111;letter-spacing:0.714px;">整体<i class="lt">KPI</i>达成情况：</div>
<div class="a" style="left:37px;top:146.8px;width:5.5px;height:5.5px;border-radius:50%;background:#111"></div>
<div class="a" style="left:90px;top:167.8px;font-size:19.45px;line-height:19.45px;color:#111;letter-spacing:0.000px;">项目关键绩效指标展示：使用</div>
<div class="a" style="left:350.5px;top:167.8px;font-size:19.45px;line-height:19.45px;color:#111;letter-spacing:0.000px;">(</div>
<div class="a" style="left:358px;top:167.8px;font-size:19.45px;line-height:19.45px;color:#111;letter-spacing:0.000px;">柱状</div>
<div class="a" style="left:396px;top:167.8px;font-size:19.45px;line-height:19.45px;color:#111;letter-spacing:0.000px;">、</div>
<div class="a" style="left:415px;top:167.8px;font-size:19.45px;line-height:19.45px;color:#111;letter-spacing:0.000px;letter-spacing:0.35px">折线、仪表</div>
<div class="a" style="left:37px;top:174.3px;width:5.5px;height:5.5px;border-radius:50%;background:#111"></div>
<div class="a" style="left:56.5px;top:190.8px;font-size:19.45px;line-height:19.45px;color:#111;letter-spacing:1.074px;">盘）直观展示最重要的<i class="lt">3-5</i>个<i class="lt">KPI</i>的实际值 <i class="lt">vs.</i> 目标</div>
<div class="a" style="left:56.5px;top:213.3px;font-size:19.45px;line-height:19.45px;color:#111;letter-spacing:0.000px;">值。</div>
<div class="a" style="left:88px;top:241.3px;font-size:19.45px;line-height:19.45px;color:#111;letter-spacing:0.617px;">项目示例：<i class="lt">*</i> 销售额、增长率、市场份额、客户满意</div>
<div class="a" style="left:37px;top:247.8px;width:5.5px;height:5.5px;border-radius:50%;background:#111"></div>
<div class="a" style="left:56.5px;top:265.3px;font-size:19.45px;line-height:19.45px;color:#111;letter-spacing:0.947px;">度(<i class="lt">NPS/CSAT</i>)、项目按时交付率、成本控制率、生产</div>
<div class="a" style="left:56.5px;top:289.3px;font-size:19.45px;line-height:19.45px;color:#111;letter-spacing:0.667px;">效率、关键任务完成率等。</div>
<div class="a" style="left:87px;top:315.7px;font-size:19.45px;line-height:19.45px;color:#111;letter-spacing:0.850px;">量化分析：对每个<i class="lt">KPI</i>进行简要解读：达成/未达</div>
<div class="a" style="left:37px;top:322.2px;width:5.5px;height:5.5px;border-radius:50%;background:#111"></div>
<div class="a" style="left:56.5px;top:337.50000000000006px;font-size:19.45px;line-height:19.45px;color:#111;letter-spacing:0.505px;">成？原因简述？与<i class="lt">Q1</i>或去年同期的对比（趋势）？</div>
<div class="a" style="left:87px;top:366.3px;font-size:19.45px;line-height:19.45px;color:#111;letter-spacing:0.348px;">项目目标达成率总结：用表格或百分比展示主要目标</div>
<div class="a" style="left:37px;top:372.8px;width:5.5px;height:5.5px;border-radius:50%;background:#111"></div>
<div class="a" style="left:56.5px;top:388.90000000000003px;font-size:19.45px;line-height:19.45px;color:#111;letter-spacing:1.600px;">的完成度。</div>
<div class="a" style="left:69.5px;top:164.7px;width:21.5px;height:26.6px;border:3px solid #f01c1c;border-radius:3.5px;box-sizing:border-box"></div>
<div class="a" style="left:335.29999999999995px;top:160.5px;width:16.8px;height:29.5px;border:3px solid #f01c1c;border-radius:3.5px;box-sizing:border-box"></div>
<div class="a" style="left:391.79999999999995px;top:160.5px;width:9.4px;height:31.8px;border:3px solid #f01c1c;border-radius:3.5px;box-sizing:border-box"></div>
<div class="a" style="left:77px;top:237.60000000000002px;width:14.3px;height:29.4px;border:3px solid #f01c1c;border-radius:3.5px;box-sizing:border-box"></div></div>
<div class="a" style="left:202px;top:632px;width:916px;height:1px;background:#d3ddd6;"></div>
<div class="a" style="left:214px;top:643px;font-size:13px;line-height:13px;color:#8a928d;font-weight:normal;letter-spacing:0.4px">单击此处添加备注</div>
<svg class="a" style="left:1106px;top:155px;" width="8" height="6" viewBox="0 0 8 6" fill="none" stroke-linecap="round" stroke-linejoin="round"><path d="M1 5 L4 1 L7 5 Z" fill="#3a4a42"/></svg>
<div class="a" style="left:1106px;top:272px;width:8px;height:100px;background:#c8dcd2;border-radius:4px"></div>
<svg class="a" style="left:1106px;top:585px;" width="8" height="6" viewBox="0 0 8 6" fill="none" stroke-linecap="round" stroke-linejoin="round"><path d="M1 1 L4 5 L7 1 Z" fill="#3a4a42"/></svg>
<svg class="a" style="left:1106px;top:600px;" width="8" height="9" viewBox="0 0 8 9" fill="none" stroke-linecap="round" stroke-linejoin="round"><path d="M1 4 L4 0.5 L7 4 Z M1 8.5 L4 5 L7 8.5 Z" fill="#3a4a42"/></svg>
<svg class="a" style="left:1106px;top:615px;" width="8" height="9" viewBox="0 0 8 9" fill="none" stroke-linecap="round" stroke-linejoin="round"><path d="M1 0.5 L4 4 L7 0.5 Z M1 5 L4 8.5 L7 5 Z" fill="#3a4a42"/></svg>
<div class="a" style="left:1118px;top:149px;width:1px;height:516px;background:#d3ddd6;"></div>
<div class="a" style="left:1140px;top:173px;width:14px;height:2px;background:#7f8984;"></div>
<div class="a" style="left:1135px;top:215.5px;font-size:12px;line-height:12px;color:#1f2a25;font-weight:normal;">属性</div>
<div class="a" style="left:1135px;top:267.5px;font-size:12px;line-height:12px;color:#1f2a25;font-weight:normal;">动画</div>
<div class="a" style="left:1135px;top:319.5px;font-size:12px;line-height:12px;color:#1f2a25;font-weight:normal;">切换</div>
<div class="a" style="left:1135px;top:371.5px;font-size:12px;line-height:12px;color:#1f2a25;font-weight:normal;">美化</div>
<div class="a" style="left:1135px;top:423.5px;font-size:12px;line-height:12px;color:#1f2a25;font-weight:normal;">主题</div>
<div class="a" style="left:1135px;top:475.5px;font-size:12px;line-height:12px;color:#1f2a25;font-weight:normal;">素材</div>
<div class="a" style="left:1135px;top:527.5px;font-size:12px;line-height:12px;color:#1f2a25;font-weight:normal;">文库</div>
<div class="a" style="left:1135px;top:580px;font-size:12px;line-height:12px;color:#1f2a25;font-weight:normal;">帮助</div>
<div class="a" style="left:1135px;top:632px;font-size:12px;line-height:12px;color:#1f2a25;font-weight:normal;">设置</div>
<svg class="a" style="left:1138px;top:195px;" width="18" height="16" viewBox="0 0 18 16" fill="none" stroke-linecap="round" stroke-linejoin="round"><circle cx="6" cy="4" r="2.5" stroke="#2a3f36" stroke-width="1.2"/><circle cx="12" cy="11.5" r="2.5" stroke="#2a3f36" stroke-width="1.2"/><path d="M1 4 H3.5 M8.5 4 H17 M1 11.5 H9.5 M14.5 11.5 H17" stroke="#2a3f36" stroke-width="1.2"/></svg>
<svg class="a" style="left:1138px;top:246px;" width="18" height="18" viewBox="0 0 18 18" fill="none" stroke-linecap="round" stroke-linejoin="round"><path d="M9 1.5 L11.2 6.3 L16.5 6.8 L12.5 10.3 L13.7 15.5 L9 12.8 M5.5 6.8 L6.8 6.6 L9 1.5 M1.5 9 H6 M3 12 H7.5 M4.5 15 H7.5" stroke="#2a3f36" stroke-width="1.2"/></svg>
<svg class="a" style="left:1138px;top:298px;" width="18" height="18" viewBox="0 0 18 18" fill="none" stroke-linecap="round" stroke-linejoin="round"><path d="M5 11.5 H2.5 Q1.5 11.5 1.5 10.5 V2.5 Q1.5 1.5 2.5 1.5 H10.5 Q11.5 1.5 11.5 2.5 V5" stroke="#2a3f36" stroke-width="1.2"/><rect x="6.5" y="6.5" width="10" height="10" rx="1" stroke="#2a3f36" stroke-width="1.2"/><path d="M4 9 V13.5 H8 M6.5 12 L8 13.5 L6.5 15" stroke="#2a3f36" stroke-width="1.2"/></svg>
<svg class="a" style="left:1138px;top:350px;" width="18" height="18" viewBox="0 0 18 18" fill="none" stroke-linecap="round" stroke-linejoin="round"><path d="M6 16.5 L16.5 6 L13.5 3 L3 13.5 Z M10 6.5 L13 9.5" stroke="#2a3f36" stroke-width="1.2"/><path d="M2 2 L3 4 L5 5 L3 6 L2 8 L1 6 L-1 5 L1 4 Z" transform="translate(3 0) scale(0.8)" stroke="#2a3f36" stroke-width="1.2"/><path d="M12 13 L13 15 L15 16" stroke="#2a3f36" stroke-width="1.2"/></svg>
<svg class="a" style="left:1138px;top:402px;" width="18" height="18" viewBox="0 0 18 18" fill="none" stroke-linecap="round" stroke-linejoin="round"><path d="M6 1.5 L1.5 4 L3 8 L4.5 7.5 V16.5 H13.5 V7.5 L15 8 L16.5 4 L12 1.5 Q9 4.5 6 1.5 Z" stroke="#2a3f36" stroke-width="1.2"/><path d="M9.5 10 L10.5 12 L12.5 13 L10.5 14 L9.5 16 L8.5 14 L6.5 13 L8.5 12 Z" stroke="#2a3f36" stroke-width="1"/></svg>
<svg class="a" style="left:1138px;top:454px;" width="18" height="18" viewBox="0 0 18 18" fill="none" stroke-linecap="round" stroke-linejoin="round"><path d="M4 16.5 H2.5 Q1.5 16.5 1.5 15.5 V5.5 Q1.5 1.5 5.5 1.5 H12.5 Q16.5 1.5 16.5 5.5 V15.5 Q16.5 16.5 15.5 16.5 H8" stroke="#2a3f36" stroke-width="1.2"/><path d="M11 8 Q14 10 12 14 Q9 13 9 10 Q9 8.5 11 8 Z M6 9 Q8 11 7 15 Q4 14 4.5 11 Z" stroke="#2a3f36" stroke-width="1.1"/></svg>
<svg class="a" style="left:1138px;top:506px;" width="18" height="18" viewBox="0 0 18 18" fill="none" stroke-linecap="round" stroke-linejoin="round"><path d="M1.5 3 L5.5 1.5 L9 3 L12.5 1.5 L14.5 2.3 M1.5 3 V15.5 L5.5 14 L9 15.5 L11 14.7 M5.5 1.5 V14 M9 3 V8" stroke="#2a3f36" stroke-width="1.2"/><circle cx="12.3" cy="10.5" r="3" stroke="#2a3f36" stroke-width="1.2"/><path d="M14.5 12.7 L16.5 14.7" stroke="#2a3f36" stroke-width="1.2"/></svg>
<svg class="a" style="left:1138px;top:558px;" width="18" height="18" viewBox="0 0 18 18" fill="none" stroke-linecap="round" stroke-linejoin="round"><circle cx="9" cy="9" r="7.6" stroke="#2a3f36" stroke-width="1.2"/><path d="M6.5 7 Q6.5 4.5 9 4.5 Q11.5 4.5 11.5 6.8 Q11.5 8.3 9 9.5 V10.8" stroke="#2a3f36" stroke-width="1.2"/><circle cx="9" cy="13.2" r="0.7" fill="#2a3f36"/></svg>
<svg class="a" style="left:1138px;top:614px;" width="18" height="8" viewBox="0 0 18 8" fill="none" stroke-linecap="round" stroke-linejoin="round"><circle cx="3" cy="4" r="1.8" stroke="#2a3f36" stroke-width="1.1"/><circle cx="9" cy="4" r="1.8" stroke="#2a3f36" stroke-width="1.1"/><circle cx="15" cy="4" r="1.8" stroke="#2a3f36" stroke-width="1.1"/></svg>
<div class="a" style="left:0px;top:665px;width:1175px;height:1px;background:#d3ddd6;"></div>
<div class="a" style="left:13.5px;top:671.5px;font-size:12.6px;line-height:12.6px;color:#1f2a25;font-weight:normal;">幻灯片 2 / 4</div>
<div class="a" style="left:88.5px;top:666px;width:1px;height:23px;background:#d3ddd6;"></div>
<svg class="a" style="left:102px;top:669px;" width="18" height="16" viewBox="0 0 18 16" fill="none" stroke-linecap="round" stroke-linejoin="round"><path d="M5 1.5 L1.5 3.5 L2.5 7 L4 6.5 V14.5 H9 M5 1.5 Q8 3.5 11 1.5 L14.5 3.5 L13.5 7 L12 6.5 V8" stroke="#2a3f36" stroke-width="1.1"/><path d="M12.5 9.5 L13.3 11.2 L15 12 L13.3 12.8 L12.5 14.5 L11.7 12.8 L10 12 L11.7 11.2 Z" stroke="#2a3f36" stroke-width="1"/></svg>
<div class="a" style="left:123.5px;top:671.5px;font-size:12.6px;line-height:12.6px;color:#1f2a25;font-weight:normal;">Office 主题</div>
<div class="a" style="left:199.5px;top:666px;width:1px;height:23px;background:#d3ddd6;"></div>
<svg class="a" style="left:215px;top:669px;" width="15" height="15" viewBox="0 0 15 15" fill="none" stroke-linecap="round" stroke-linejoin="round"><path d="M6 13.5 H1.5 V1.5 H5.5 L7 3 L8.5 1.5 H12.5 V6" stroke="#2a3f36" stroke-width="1.1"/><path d="M4 5.5 L6 7.5 L9 4" stroke="#2a3f36" stroke-width="1"/><circle cx="9.5" cy="10" r="2.8" stroke="#2a3f36" stroke-width="1.1"/><path d="M11.5 12 L13.5 14" stroke="#2a3f36" stroke-width="1.1"/></svg>
<div class="a" style="left:233.5px;top:671.5px;font-size:12.6px;line-height:12.6px;color:#1f2a25;font-weight:normal;">校对</div>
<div class="a" style="left:272.5px;top:666px;width:1px;height:23px;background:#d3ddd6;"></div>
<svg class="a" style="left:288px;top:670px;" width="14" height="13" viewBox="0 0 14 13" fill="none" stroke-linecap="round" stroke-linejoin="round"><path d="M7 1 L13.5 12 H0.5 Z" fill="#f5b93a"/><path d="M7 4.5 V8.5" stroke="#3b2a08" stroke-width="1.4"/><circle cx="7" cy="10.3" r="0.8" fill="#3b2a08"/></svg>
<div class="a" style="left:307px;top:671.5px;font-size:12.6px;line-height:12.6px;color:#1f2a25;font-weight:normal;">缺失字体</div>
<svg class="a" style="left:476px;top:669px;" width="16" height="15" viewBox="0 0 16 15" fill="none" stroke-linecap="round" stroke-linejoin="round"><path d="M8 1.5 L14 4.5 V11 L8 14 L2 11 V4.5 Z M2 4.5 L8 7.5 L14 4.5 M8 7.5 V14" stroke="#2a3f36" stroke-width="1.1"/></svg>
<div class="a" style="left:496px;top:671.5px;font-size:12.6px;line-height:12.6px;color:#1f2a25;font-weight:normal;">智能美化</div>
<svg class="a" style="left:549px;top:675px;" width="7" height="5" viewBox="0 0 7 5" fill="none" stroke-linecap="round" stroke-linejoin="round"><path d="M1 1 L3.5 4 L6 1" stroke="#223a31" stroke-width="1.4"/></svg>
<div class="a" style="left:570px;top:666px;width:1px;height:23px;background:#d3ddd6;"></div>
<svg class="a" style="left:586px;top:670px;" width="14" height="13" viewBox="0 0 14 13" fill="none" stroke-linecap="round" stroke-linejoin="round"><path d="M1 6.5 H13 M1 12 H13 M1 1 H6 M8.5 1 L10.5 3 L12.5 1" stroke="#2a3f36" stroke-width="1.2"/></svg>
<div class="a" style="left:604.5px;top:671.5px;font-size:12.6px;line-height:12.6px;color:#1f2a25;font-weight:normal;">备注</div>
<svg class="a" style="left:634px;top:675px;" width="7" height="5" viewBox="0 0 7 5" fill="none" stroke-linecap="round" stroke-linejoin="round"><path d="M1 1 L3.5 4 L6 1" stroke="#223a31" stroke-width="1.4"/></svg>
<svg class="a" style="left:661px;top:669px;" width="16" height="15" viewBox="0 0 16 15" fill="none" stroke-linecap="round" stroke-linejoin="round"><path d="M4 12 L1.5 14 V1.5 H13.5 V7.5 M9 12 H4" stroke="#2a3f36" stroke-width="1.2"/><path d="M12 9.5 V14.5 M9.5 12 H14.5" stroke="#2a3f36" stroke-width="1.2"/></svg>
<div class="a" style="left:680.5px;top:671.5px;font-size:12.6px;line-height:12.6px;color:#1f2a25;font-weight:normal;">批注</div>
<div class="a" style="left:719px;top:666px;width:1px;height:23px;background:#d3ddd6;"></div>
<div class="a" style="left:728px;top:665.5px;width:24px;height:23px;background:#c6e2d2;border-radius:4px"></div>
<svg class="a" style="left:732px;top:670px;" width="16" height="14" viewBox="0 0 16 14" fill="none" stroke-linecap="round" stroke-linejoin="round"><rect x="1" y="1" width="14" height="11.5" rx="1" stroke="#2a3f36" stroke-width="1.2"/><path d="M5 4 V9.5" stroke="#2a3f36" stroke-width="1.3"/></svg>
<svg class="a" style="left:764px;top:670px;" width="16" height="14" viewBox="0 0 16 14" fill="none" stroke-linecap="round" stroke-linejoin="round"><rect x="1.5" y="1" width="5.5" height="4.8" rx="1" stroke="#2a3f36" stroke-width="1.1"/><rect x="9" y="1" width="5.5" height="4.8" rx="1" stroke="#2a3f36" stroke-width="1.1"/><rect x="1.5" y="7.7" width="5.5" height="4.8" rx="1" stroke="#2a3f36" stroke-width="1.1"/><rect x="9" y="7.7" width="5.5" height="4.8" rx="1" stroke="#2a3f36" stroke-width="1.1"/></svg>
<svg class="a" style="left:797px;top:670px;" width="16" height="15" viewBox="0 0 16 15" fill="none" stroke-linecap="round" stroke-linejoin="round"><path d="M8 3 Q5 1 1 1.5 V12 Q5 11.5 8 13.5 Q11 11.5 15 12 V1.5 Q11 1 8 3 V13.5" stroke="#2a3f36" stroke-width="1.1"/></svg>
<div class="a" style="left:824px;top:666px;width:1px;height:23px;background:#d3ddd6;"></div>
<div class="a" style="left:835px;top:668px;width:20px;height:18px;background:#e8621e;border-radius:3px"></div>
<svg class="a" style="left:840px;top:672px;" width="10" height="10" viewBox="0 0 10 10" fill="none" stroke-linecap="round" stroke-linejoin="round"><path d="M2 1 L8.5 5 L2 9 Z" fill="#ffffff"/></svg>
<svg class="a" style="left:863px;top:675px;" width="7" height="5" viewBox="0 0 7 5" fill="none" stroke-linecap="round" stroke-linejoin="round"><path d="M1 1 L3.5 4 L6 1" stroke="#223a31" stroke-width="1.4"/></svg>
<div class="a" style="left:883px;top:666px;width:1px;height:23px;background:#d3ddd6;"></div>
<svg class="a" style="left:897px;top:669px;" width="15" height="15" viewBox="0 0 15 15" fill="none" stroke-linecap="round" stroke-linejoin="round"><path d="M1 4.5 V1 H4.5 M10.5 1 H14 V4.5 M14 10.5 V14 H10.5 M4.5 14 H1 V10.5" stroke="#2a3f36" stroke-width="1.2"/><rect x="4.5" y="4.5" width="6" height="6" stroke="#2a3f36" stroke-width="1.2"/></svg>
<div class="a" style="left:935px;top:671.5px;font-size:12.6px;line-height:12.6px;color:#1f2a25;font-weight:normal;">60%</div>
<svg class="a" style="left:974.5px;top:675px;" width="7" height="5" viewBox="0 0 7 5" fill="none" stroke-linecap="round" stroke-linejoin="round"><path d="M1 1 L3.5 4 L6 1" stroke="#223a31" stroke-width="1.4"/></svg>
<div class="a" style="left:999px;top:676px;width:12px;height:1.8px;background:#223a31;"></div>
<div class="a" style="left:1025px;top:676px;width:106px;height:1.2px;background:#d5dcd8;"></div>
<div class="a" style="left:1025px;top:675.8px;width:31px;height:1.8px;background:#1d7c4f;"></div>
<div class="a" style="left:1051px;top:671.5px;width:10px;height:10px;border-radius:50%;background:#fff;box-shadow:0 0 1.5px rgba(0,0,0,0.35)"></div>
<div class="a" style="left:1053.8px;top:674.3px;width:4.4px;height:4.4px;border-radius:50%;background:#7aa592"></div>
<svg class="a" style="left:1145px;top:670px;" width="12" height="12" viewBox="0 0 12 12" fill="none" stroke-linecap="round" stroke-linejoin="round"><path d="M6 0.5 V11.5 M0.5 6 H11.5" stroke="#223a31" stroke-width="1.8" stroke-linecap="butt"/></svg>
</body></html>
